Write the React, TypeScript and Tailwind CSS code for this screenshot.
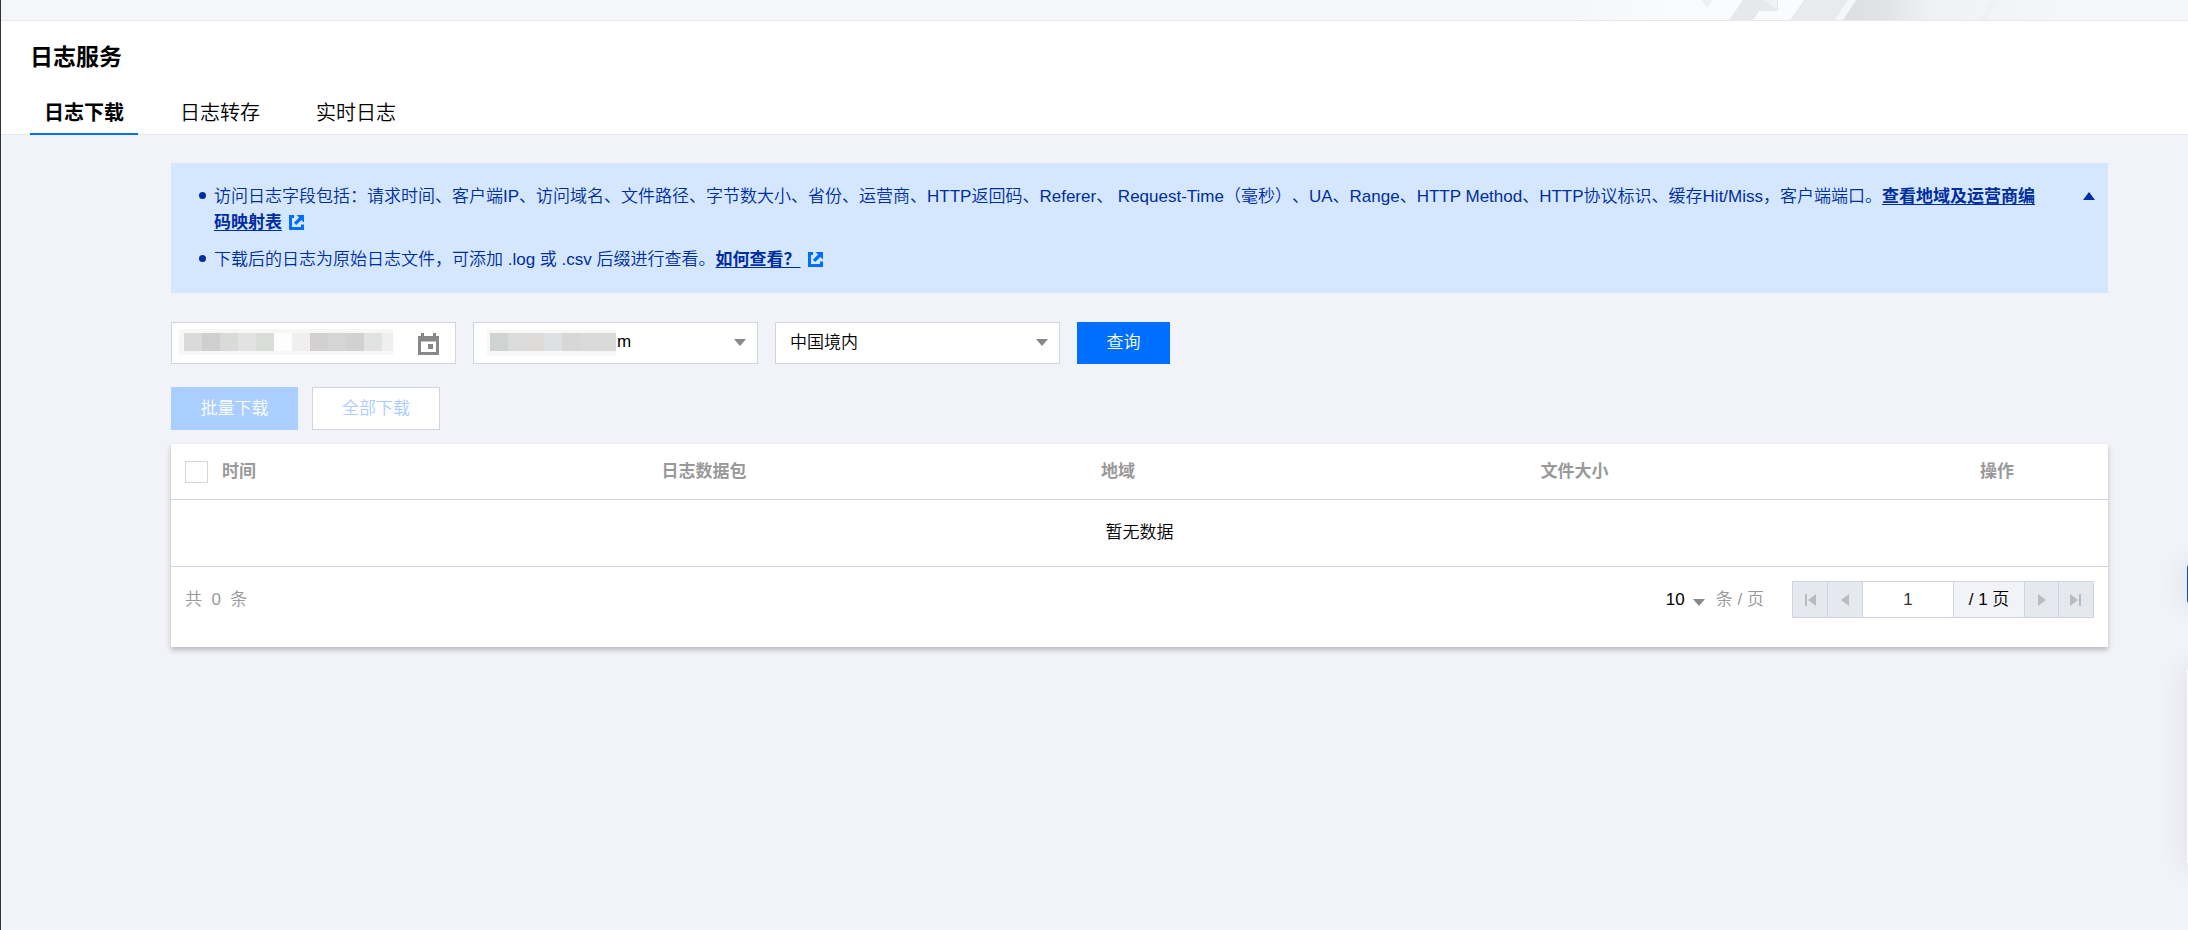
import React from "react";

const cjk = "font-['Liberation_Sans','Noto_Sans_CJK_SC',sans-serif]";

function ExternalIcon() {
  return (
    <svg className="ml-[7px] inline-block h-[15px] w-[15px] align-[-2px]" viewBox="0 0 15 15" fill="none" aria-hidden="true">
      <path d="M5 1.5H1.5V13.5H13.5V9.5" stroke="#006eff" strokeWidth="3" />
      <path d="M7.5 0H15V7.5L12.4 4.9L7.2 10.1L4.9 7.8L10.1 2.6Z" fill="#006eff" />
    </svg>
  );
}

function Caret({ className = "" }: { className?: string }) {
  return (
    <svg className={`h-[7px] w-[12px] ${className}`} viewBox="0 0 12 7" aria-hidden="true">
      <path d="M0 0H12L6 7Z" fill="#888" />
    </svg>
  );
}

const dateBlocks = ["bg-[#dadad8]", "bg-[#d0cfcf]", "bg-[#d9dbd9]", "bg-[#e3e2e2]", "bg-[#dadcd9]", "bg-[#fdfdfd]", "bg-[#f0efed]", "bg-[#d3d0d1]", "bg-[#d6d5d5]", "bg-[#d2d0d1]", "bg-[#e1e3e2]"];
const domainBlocks = ["bg-[#cfd3d4]", "bg-[#dbdbdb]", "bg-[#dddbda]", "bg-[#dde1e4]", "bg-[#d8d6d7]", "bg-[#dadada]", "bg-[#dadada]"];

function PageButton({ label, path, width = "w-[35px]" }: { label: string; path: string; width?: string }) {
  return (
    <button aria-label={label} disabled className={`flex items-center justify-center border-r border-[#cfd5de] bg-[#e5e8ee] last:border-r-0 ${width}`}>
      <svg className="h-[12px] w-[12px]" viewBox="0 0 12 12" fill="#bbb" aria-hidden="true">
        <path d={path} />
      </svg>
    </button>
  );
}

export default function App() {
  return (
    <div className={`relative min-h-screen overflow-hidden border-l border-[#333] bg-[#f2f3f8] text-[17px] leading-[26px] font-[350] text-black [text-spacing-trim:space-all] ${cjk}`}>
      <div className="flex h-[21px] justify-end border-b border-[#e5e8ef] bg-[#f5f6f8]">
        <svg className="h-5 w-[628px]" viewBox="0 0 628 20" aria-hidden="true">
          <defs>
            <linearGradient id="haze" x1="0" x2="1">
              <stop offset="0" stopColor="#f5f6f8" />
              <stop offset="0.4" stopColor="#fafbfc" />
              <stop offset="1" stopColor="#fafbfc" />
            </linearGradient>
            <linearGradient id="band" x1="0" x2="1">
              <stop offset="0" stopColor="#dddee0" />
              <stop offset="0.2" stopColor="#e2e3e4" />
              <stop offset="0.4" stopColor="#f0f1f2" />
              <stop offset="1" stopColor="#f5f6f8" />
            </linearGradient>
          </defs>
          <path d="M0 0H300V20H0Z" fill="url(#haze)" />
          <path d="M141 0H153L147 8Z" fill="#eeeff1" />
          <path d="M183 0H218V11H199L193 20H169Z" fill="#e7e8e9" />
          <path d="M203 0H217V9Z" fill="#f0f1f2" />
          <path d="M244 0H288L275 20H230Z" fill="#e9eaeb" />
          <path d="M288 0H296L283 20H275Z" fill="#f5f6f7" />
          <path d="M296 0H500V20H283Z" fill="url(#band)" />
          <path d="M433 0H437L425 20H420Z" fill="#eff0f2" />
        </svg>
      </div>

      <header className="border-b border-[#e5e8ef] bg-white px-[29px]">
        <h1 className="pt-[20px] text-[23px] leading-[32px] font-bold">日志服务</h1>
        <nav className="-mb-px flex gap-7 pt-[25px] text-[20px] leading-[30px]">
          <a href="#download" className="border-b-2 border-[#006eff] px-[14px] pb-[5px] font-bold">日志下载</a>
          <a href="#dump" className="px-[14px]">日志转存</a>
          <a href="#realtime" className="px-[14px]">实时日志</a>
        </nav>
      </header>

      <main className="pt-7 pr-20 pl-[170px]">
        <section className="flex items-start justify-between bg-[#d5e7ff] pt-[21px] pr-[13px] pb-5 pl-[28px] text-[#002da0]">
          <ul className="flex flex-1 flex-col gap-[11px] pr-[43px]">
            <li className="flex gap-2">
              <span className="mt-[8px] h-[7px] w-[7px] shrink-0 rounded-full bg-[#002da0]" />
              <p>
                访问日志字段包括：请求时间、客户端IP、访问域名、文件路径、字节数大小、省份、运营商、HTTP返回码、Referer、 Request-Time（毫秒）、UA、Range、HTTP Method、HTTP协议标识、缓存Hit/Miss，客户端端口。
                <a href="#map" className="font-bold underline underline-offset-2">查看地域及运营商编码映射表</a>
                <ExternalIcon />
              </p>
            </li>
            <li className="flex gap-2">
              <span className="mt-[8px] h-[7px] w-[7px] shrink-0 rounded-full bg-[#002da0]" />
              <p>
                下载后的日志为原始日志文件，可添加 .log 或 .csv 后缀进行查看。
                <a href="#how" className="font-bold underline underline-offset-2">如何查看？</a>
                <ExternalIcon />
              </p>
            </li>
          </ul>
          <button aria-label="收起" className="mt-[8px]">
            <svg className="h-[8px] w-[12px]" viewBox="0 0 12 8" aria-hidden="true">
              <path d="M6 0L12 8H0Z" fill="#002da0" />
            </svg>
          </button>
        </section>

        <form className="mt-[29px] flex gap-[17px]" onSubmit={(e) => e.preventDefault()}>
          <div className="relative h-[42px] w-[285px]">
            <input aria-label="日期" className="h-full w-full border border-[#cfd5de] bg-white px-3" />
            <div className="absolute top-[7px] left-[8px] flex bg-[#f7f7f8] py-1 pl-[5px]">
              {dateBlocks.map((c, i) => (
                <span key={i} className={`h-[18px] w-[18px] ${c}`} />
              ))}
              <span className="h-[18px] w-[11px] bg-[#efeff1]" />
            </div>
            <svg className="absolute top-[11px] right-[17px] h-[22px] w-[21px]" viewBox="0 0 21 22" aria-hidden="true">
              <path fillRule="evenodd" fill="#888" d="M3 0H6V3H15V0H18V3H21V22H0V3H3ZM3 8.5V19H18V8.5ZM10 11H15V16H10Z" />
            </svg>
          </div>
          <div className="relative h-[42px] w-[285px]">
            <select aria-label="域名" className="h-full w-full appearance-none border border-[#cfd5de] bg-white pb-0.5 pl-[143px]">
              <option>m</option>
            </select>
            <div className="pointer-events-none absolute top-[8px] left-[14px] flex bg-[#f7f7f8] pt-[3px] pb-[5px] pl-[3px]">
              {domainBlocks.map((c, i) => (
                <span key={i} className={`h-[18px] w-[18px] ${c}`} />
              ))}
            </div>
            <Caret className="pointer-events-none absolute top-[17px] right-[12px]" />
          </div>
          <div className="relative h-[42px] w-[285px]">
            <select aria-label="地域" className="h-full w-full appearance-none border border-[#cfd5de] bg-white pl-[14px]">
              <option>中国境内</option>
            </select>
            <Caret className="pointer-events-none absolute top-[17px] right-[12px]" />
          </div>
          <button className="h-[42px] w-[93px] bg-[#006eff] text-white">查询</button>
        </form>

        <div className="mt-[23px] flex gap-[14px]">
          <button disabled className="h-[43px] w-[127px] bg-[#a9ceff] text-white">批量下载</button>
          <button disabled className="h-[43px] w-[128px] border border-[#cfd5de] bg-white text-[#a9ceff]">全部下载</button>
        </div>

        <section className="mt-[14px] bg-white shadow-[0_3px_5px_rgba(54,58,80,0.32)]">
          <table className="w-full table-fixed border-separate border-spacing-0 text-left">
            <colgroup>
              <col className="w-[37px]" />
              <col />
              <col />
              <col />
              <col />
              <col className="w-[142px]" />
            </colgroup>
            <thead>
              <tr className="h-[56px] text-[#999]">
                <th className="border-b border-[#cfd5de] pl-[14px]">
                  <input type="checkbox" aria-label="全选" className="block h-[22px] w-[23px] appearance-none border border-[#cfd5de] bg-white" />
                </th>
                <th className="border-b border-[#cfd5de] px-[14px]">时间</th>
                <th className="border-b border-[#cfd5de] px-[14px]">日志数据包</th>
                <th className="border-b border-[#cfd5de] px-[14px]">地域</th>
                <th className="border-b border-[#cfd5de] px-[14px]">文件大小</th>
                <th className="border-b border-[#cfd5de] px-[14px]">操作</th>
              </tr>
            </thead>
            <tbody>
              <tr className="h-[67px]">
                <td colSpan={6} className="border-b border-[#cfd5de] text-center">暂无数据</td>
              </tr>
            </tbody>
          </table>
          <div className="flex items-center justify-between px-[14px] pt-[14px] pb-[29px]">
            <p className="text-[#999]">共&nbsp; 0 &nbsp;条</p>
            <div className="flex items-center">
              <div className="relative">
                <select aria-label="每页条数" className="w-[39px] appearance-none bg-white">
                  <option>10</option>
                </select>
                <Caret className="pointer-events-none absolute top-[12px] right-0" />
              </div>
              <span className="pl-[11px] text-[#999]">条 / 页</span>
              <div className="ml-7 flex h-[37px] border border-[#cfd5de]">
                <PageButton label="首页" path="M1 0H3V12H1ZM12 0V12L4 6Z" />
                <PageButton label="上一页" path="M10 0V12L2 6Z" />
                <input aria-label="页码" defaultValue="1" className="w-[91px] border-r border-[#cfd5de] bg-white text-center text-[#333]" />
                <span className="flex w-[71px] items-center justify-center border-r border-[#cfd5de] bg-[#f2f3f8]">/ 1 页</span>
                <PageButton label="下一页" path="M2 0V12L10 6Z" width="w-[34px]" />
                <PageButton label="末页" path="M9 0H11V12H9ZM0 0V12L8 6Z" width="w-[34px]" />
              </div>
            </div>
          </div>
        </section>
      </main>

      <aside className="absolute top-[564px] -right-[59px] flex w-[60px] flex-col gap-16">
        <div className="h-[40px] rounded-l-sm bg-[#0b4fb5] shadow-[0_0_28px_rgba(54,58,80,0.12)]" />
        <div className="h-[197px] rounded-l-sm bg-white shadow-[0_0_28px_rgba(54,58,80,0.12)]" />
      </aside>
    </div>
  );
}
